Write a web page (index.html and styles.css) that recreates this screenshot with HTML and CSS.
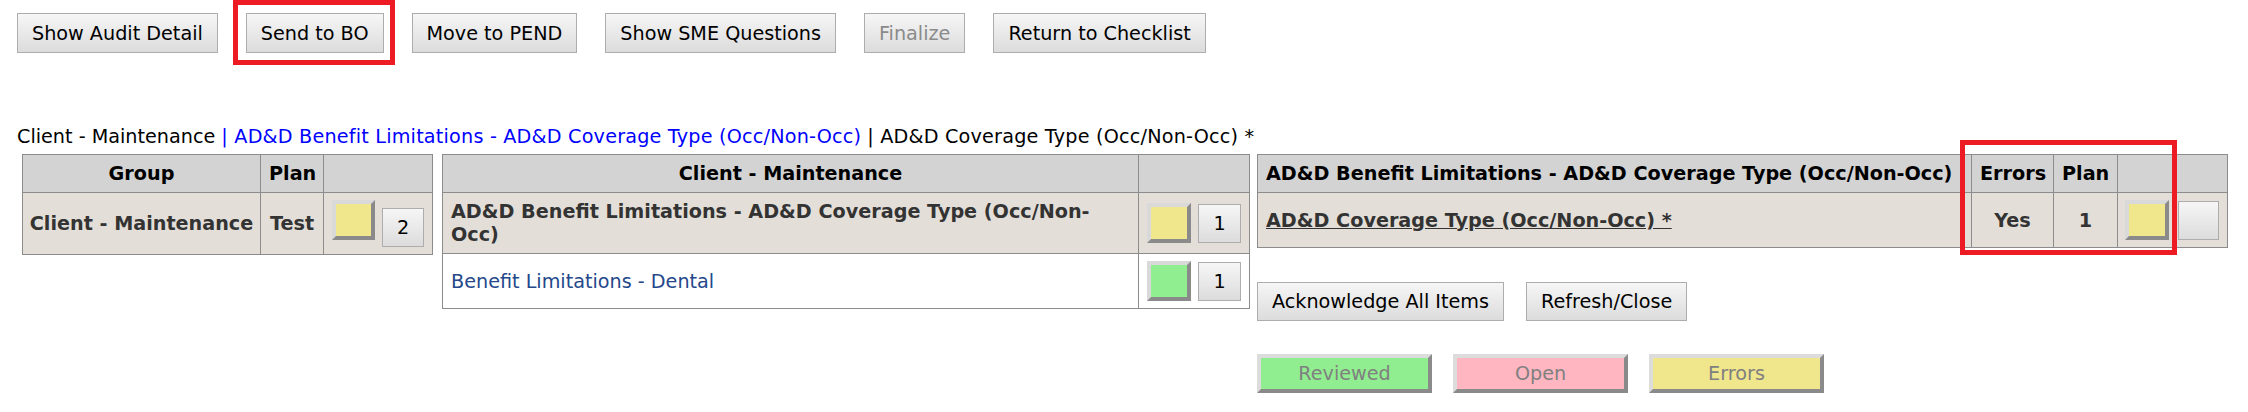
FILE: index.html
```html
<!DOCTYPE html>
<html lang="en">
<head>
<meta charset="utf-8">
<title>Audit</title>
<link rel="stylesheet" href="styles.css">
</head>
<body>
<div class="toolbar">
  <button class="btn">Show Audit Detail</button>
  <button class="btn">Send to BO</button>
  <button class="btn">Move to PEND</button>
  <button class="btn">Show SME Questions</button>
  <button class="btn" disabled>Finalize</button>
  <button class="btn">Return to Checklist</button>
</div>

<div class="crumbs"><span>Client - Maintenance</span> <span class="crumb-link">| AD&amp;D Benefit Limitations - AD&amp;D Coverage Type (Occ/Non-Occ)</span> <span class="crumb-tail">| AD&amp;D Coverage Type (Occ/Non-Occ) *</span></div>

<div class="panels">
  <table class="grid group">
    <colgroup><col class="c-group"><col class="c-plan"><col class="c-ind"></colgroup>
    <thead>
      <tr><th>Group</th><th>Plan</th><th></th></tr>
    </thead>
    <tbody>
      <tr>
        <td class="strong center">Client - Maintenance</td>
        <td class="strong center">Test</td>
        <td><div class="ind ind-offset"><span class="lamp"></span><button class="count">2</button></div></td>
      </tr>
    </tbody>
  </table>

  <table class="grid middle">
    <colgroup><col class="c-name"><col class="c-ind"></colgroup>
    <thead>
      <tr><th>Client - Maintenance</th><th></th></tr>
    </thead>
    <tbody>
      <tr>
        <td class="strong">AD&amp;D Benefit Limitations - AD&amp;D Coverage Type (Occ/Non-Occ)</td>
        <td><div class="ind"><span class="lamp"></span><button class="count">1</button></div></td>
      </tr>
      <tr class="plain">
        <td class="navy">Benefit Limitations - Dental</td>
        <td><div class="ind"><span class="lamp lamp-green"></span><button class="count">1</button></div></td>
      </tr>
    </tbody>
  </table>

  <div class="detail">
    <table class="grid right">
      <colgroup><col class="c-title"><col class="c-errors"><col class="c-plan2"><col class="c-ind"></colgroup>
      <thead>
        <tr><th class="left">AD&amp;D Benefit Limitations - AD&amp;D Coverage Type (Occ/Non-Occ)</th><th>Errors</th><th>Plan</th><th></th></tr>
      </thead>
      <tbody>
        <tr>
          <td><a class="item-link" href="#">AD&amp;D Coverage Type (Occ/Non-Occ) *</a></td>
          <td class="strong center">Yes</td>
          <td class="strong center">1</td>
          <td><div class="ind ind-wide"><span class="lamp"></span><button class="count count-empty"></button></div></td>
        </tr>
      </tbody>
    </table>

    <div class="actions">
      <button class="btn btn-sm">Acknowledge All Items</button>
      <button class="btn btn-sm">Refresh/Close</button>
    </div>

    <div class="legend">
      <div class="key key-reviewed">Reviewed</div>
      <div class="key key-open">Open</div>
      <div class="key key-errors">Errors</div>
    </div>
  </div>
</div>

<div class="callout callout-send"></div>
<div class="callout callout-errors"></div>
</body>
</html>
```

FILE: styles.css
```css
html, body {
  margin: 0;
  padding: 0;
}

body {
  position: relative;
  min-height: 412px;
  background: #ffffff;
  color: #000000;
  font-family: "DejaVu Sans", Verdana, sans-serif;
  font-size: 19.2px;
  line-height: 23px;
}

.toolbar {
  display: flex;
  gap: 28px;
  padding: 13px 0 0 17px;
}

.btn {
  font: inherit;
  line-height: 23px;
  height: 40px;
  padding: 0 14px;
  border: 1px solid #adadad;
  border-radius: 0;
  background: linear-gradient(#f6f6f6, #dcdcdc);
  color: #000000;
  white-space: nowrap;
}

.btn:disabled {
  color: #8a8a8a;
}

.btn-sm {
  height: 39px;
}

.crumbs {
  margin: 72px 0 0 17px;
  white-space: nowrap;
}

.crumb-link {
  color: #0000ff;
  letter-spacing: 0.2px;
}

.crumb-tail {
  letter-spacing: 0.2px;
}

.panels {
  display: flex;
  align-items: flex-start;
  margin: 6px 0 0 22px;
}

.grid {
  border-collapse: collapse;
  table-layout: fixed;
}

.grid th,
.grid td {
  border: 1px solid #8c8c8c;
  padding: 7px 8px;
  line-height: 23px;
}

.grid th {
  background: #d3d3d3;
  color: #000000;
  font-weight: bold;
  text-align: center;
  white-space: nowrap;
}

.grid th.left {
  text-align: left;
}

.grid td {
  background: #e3dfd8;
  color: #333333;
  text-align: left;
}

.grid tr.plain td {
  background: #ffffff;
}

.strong {
  font-weight: bold;
}

.grid td.center {
  text-align: center;
}

.grid td.navy {
  color: #24488a;
}

.group {
  width: 410px;
}

.group td {
  white-space: nowrap;
}

.group td.strong {
  padding-left: 6px;
  padding-right: 6px;
}

.group .c-group { width: 238px; }
.group .c-plan { width: 63px; }
.group .c-ind { width: 109px; }

.middle {
  width: 807px;
  margin-left: 9px;
}

.middle .c-name { width: 696px; }
.middle .c-ind { width: 111px; }

.detail {
  display: flex;
  flex-direction: column;
  align-items: flex-start;
  margin-left: 7px;
}

.right {
  width: 970px;
}

.right .c-title { width: 714px; }
.right .c-errors { width: 82px; }
.right .c-plan2 { width: 64px; }
.right .c-ind { width: 110px; }

.item-link {
  color: #333333;
  font-weight: bold;
  text-decoration: underline;
  white-space: nowrap;
}

.ind {
  display: flex;
  align-items: center;
  gap: 7px;
}

.ind-offset {
  align-items: flex-start;
}

.ind-offset .count {
  margin-top: 8px;
}

.ind-wide {
  gap: 9px;
  margin-left: -1px;
}

.lamp {
  display: block;
  box-sizing: border-box;
  width: 44px;
  height: 40px;
  border: 4px solid;
  border-color: #d9d9d9 #8a8a8a #8a8a8a #d9d9d9;
  background: #f0e68c;
}

.lamp-green {
  background: #90ee90;
}

.count {
  box-sizing: border-box;
  width: 43px;
  height: 39px;
  padding: 0;
  font: inherit;
  line-height: 23px;
  border: 1px solid #adadad;
  border-radius: 0;
  background: linear-gradient(#f6f6f6, #dcdcdc);
  color: #000000;
}

.count-empty {
  width: 41px;
}

.actions {
  display: flex;
  gap: 22px;
  margin-top: 34px;
}

.legend {
  display: flex;
  gap: 21px;
  margin-top: 33px;
}

.key {
  display: flex;
  align-items: center;
  justify-content: center;
  box-sizing: border-box;
  width: 175px;
  height: 39px;
  border: 4px solid;
  border-color: #dcdcdc #8a8a8a #8a8a8a #dcdcdc;
  color: #808080;
}

.key-reviewed { background: #90ee90; }
.key-open { background: #ffb6c1; }
.key-errors { background: #f0e68c; }

.callout {
  position: absolute;
  box-sizing: border-box;
  border: 5px solid #ed1c24;
}

.callout-send {
  left: 233px;
  top: 0;
  width: 162px;
  height: 65px;
}

.callout-errors {
  left: 1960px;
  top: 140px;
  width: 217px;
  height: 115px;
}
```
